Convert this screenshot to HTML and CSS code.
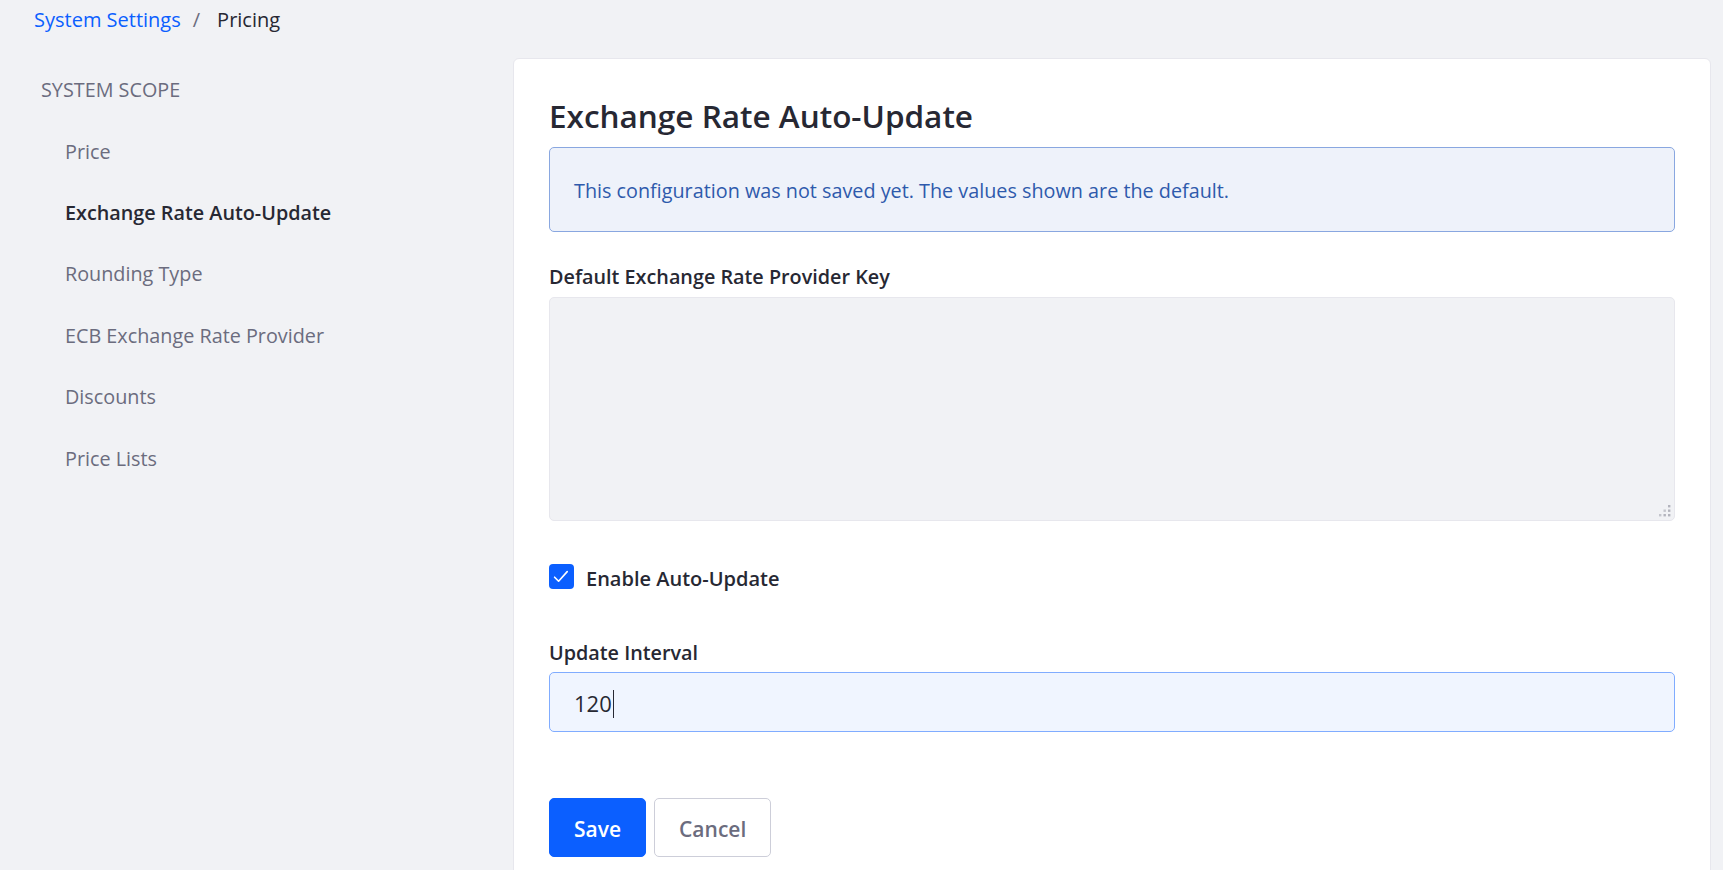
FILE: index.html
```html
<!DOCTYPE html>
<html lang="en">
<head>
<meta charset="utf-8">
<title>Pricing - System Settings</title>
<link rel="stylesheet" href="styles.css">
</head>
<body>
<div class="breadcrumb">
  <a class="crumb-link" href="#">System Settings</a><span class="crumb-sep">/</span><span class="crumb-current">Pricing</span>
</div>
<div class="main">
  <nav class="sidebar">
    <div class="scope">SYSTEM SCOPE</div>
    <ul class="nav">
      <li class="nav-item">Price</li>
      <li class="nav-item active">Exchange Rate Auto-Update</li>
      <li class="nav-item">Rounding Type</li>
      <li class="nav-item">ECB Exchange Rate Provider</li>
      <li class="nav-item">Discounts</li>
      <li class="nav-item">Price Lists</li>
    </ul>
  </nav>
  <section class="card">
    <h2 class="title">Exchange Rate Auto-Update</h2>
    <div class="alert">This configuration was not saved yet. The values shown are the default.</div>
    <label class="label">Default Exchange Rate Provider Key</label>
    <div class="textarea-wrap">
      <textarea class="textarea" disabled></textarea>
      <svg class="grip" width="12" height="12" viewBox="0 0 12 12">
        <rect x="9" y="0" width="2.4" height="2.4" fill="#b3b4bd"/>
        <rect x="4.5" y="4.5" width="2.4" height="2.4" fill="#c4c5cc"/>
        <rect x="9" y="4.5" width="2.4" height="2.4" fill="#b3b4bd"/>
        <rect x="0" y="9" width="2.4" height="2.4" fill="#c4c5cc"/>
        <rect x="4.5" y="9" width="2.4" height="2.4" fill="#b3b4bd"/>
        <rect x="9" y="9" width="2.4" height="2.4" fill="#b3b4bd"/>
      </svg>
    </div>
    <div class="check-row">
      <span class="checkbox">
        <svg width="25" height="25" viewBox="0 0 25 25"><path d="M5.6 13.2 L9.6 17.2 L18.2 7.6" stroke="#fff" stroke-width="1.6" fill="none" stroke-linecap="round" stroke-linejoin="round"/></svg>
      </span>
      <span class="check-label">Enable Auto-Update</span>
    </div>
    <label class="label label-interval">Update Interval</label>
    <div class="input"><span class="input-text">120</span><span class="caret"></span></div>
    <div class="actions">
      <button class="btn btn-primary" type="button">Save</button>
      <button class="btn btn-secondary" type="button">Cancel</button>
    </div>
  </section>
</div>
</body>
</html>
```
FILE: styles.css
```css
html, body {
  margin: 0;
  padding: 0;
}
body {
  height: 870px;
  overflow: hidden;
  background: #f1f2f5;
  font-family: "Open Sans", "Noto Sans", sans-serif;
  font-size: 20px;
  line-height: 30px;
  color: #272833;
}
.breadcrumb {
  padding: 5px 0 0 34px;
  height: 30px;
  display: flex;
  align-items: baseline;
}
.crumb-link {
  color: #0b5fff;
  text-decoration: none;
}
.crumb-sep {
  color: #6b6c7e;
  margin: 0 17px 0 12px;
}
.crumb-current {
  color: #272833;
}
.main {
  display: flex;
  align-items: flex-start;
}
.sidebar {
  flex: 0 0 513px;
  box-sizing: border-box;
  padding: 40px 0 0 41px;
  font-size: 19.8px;
}
.scope {
  color: #6b6c7e;
  margin-bottom: 16px;
}
.nav {
  list-style: none;
  margin: 0;
  padding: 0;
}
.nav-item {
  padding: 15.7px 0 15.7px 24px;
  color: #6b6c7e;
}
.nav-item.active {
  color: #272833;
  font-weight: 600;
}
.card {
  flex: 1;
  margin: 23px 12px 0 0;
  background: #fff;
  border: 1px solid #e7e7ed;
  border-radius: 6px;
  padding: 38px 35px 36px;
  display: flex;
  flex-direction: column;
}
.title {
  margin: 0 0 12px;
  font-size: 31.5px;
  line-height: 37.8px;
  font-weight: 600;
  color: #272833;
}
.alert {
  background: #eef2fa;
  border: 1px solid #89a7e0;
  border-radius: 5px;
  color: #2e5aac;
  font-size: 19.8px;
  padding: 28px 24px 25px;
  margin-bottom: 30px;
}
.label {
  display: block;
  font-weight: 600;
  font-size: 19.8px;
  color: #272833;
  margin-bottom: 5px;
}
.textarea-wrap {
  position: relative;
  height: 224px;
}
.textarea {
  display: block;
  box-sizing: border-box;
  width: 100%;
  height: 224px;
  margin: 0;
  resize: none;
  background: #f1f2f5;
  border: 1px solid #e7e7ed;
  border-radius: 5px;
}
.grip {
  position: absolute;
  right: 4px;
  bottom: 4px;
}
.check-row {
  display: flex;
  align-items: flex-start;
  margin-top: 42px;
  height: 30px;
}
.checkbox {
  width: 25px;
  height: 25px;
  margin-top: 1px;
  border-radius: 4px;
  background: #0b5fff;
  display: flex;
}
.check-label {
  margin-left: 12px;
  padding-top: 1px;
  font-weight: 600;
}
.label-interval {
  margin-top: 45px;
  margin-bottom: 4px;
}
.input {
  box-sizing: border-box;
  height: 60px;
  display: flex;
  align-items: center;
  padding: 3px 24px 0;
  background: #f0f5ff;
  border: 1px solid #80acff;
  border-radius: 5px;
  font-size: 22px;
  color: #272833;
}
.input-text {
  line-height: 30px;
}
.caret {
  width: 1px;
  height: 28px;
  margin-top: 2px;
  background: #272833;
  margin-left: 1px;
}
.actions {
  display: flex;
  gap: 8px;
  margin-top: 66px;
}
.btn {
  font-family: "Open Sans", "Noto Sans", sans-serif;
  font-size: 21px;
  line-height: 30px;
  font-weight: 600;
  border-radius: 5px;
  padding: 15px 24px 12px;
  border: 1px solid transparent;
  cursor: pointer;
}
.btn-primary {
  background: #0b5fff;
  border-color: #0b5fff;
  color: #fff;
}
.btn-secondary {
  background: #fff;
  border-color: #cdced9;
  color: #6b6c7e;
}
```
